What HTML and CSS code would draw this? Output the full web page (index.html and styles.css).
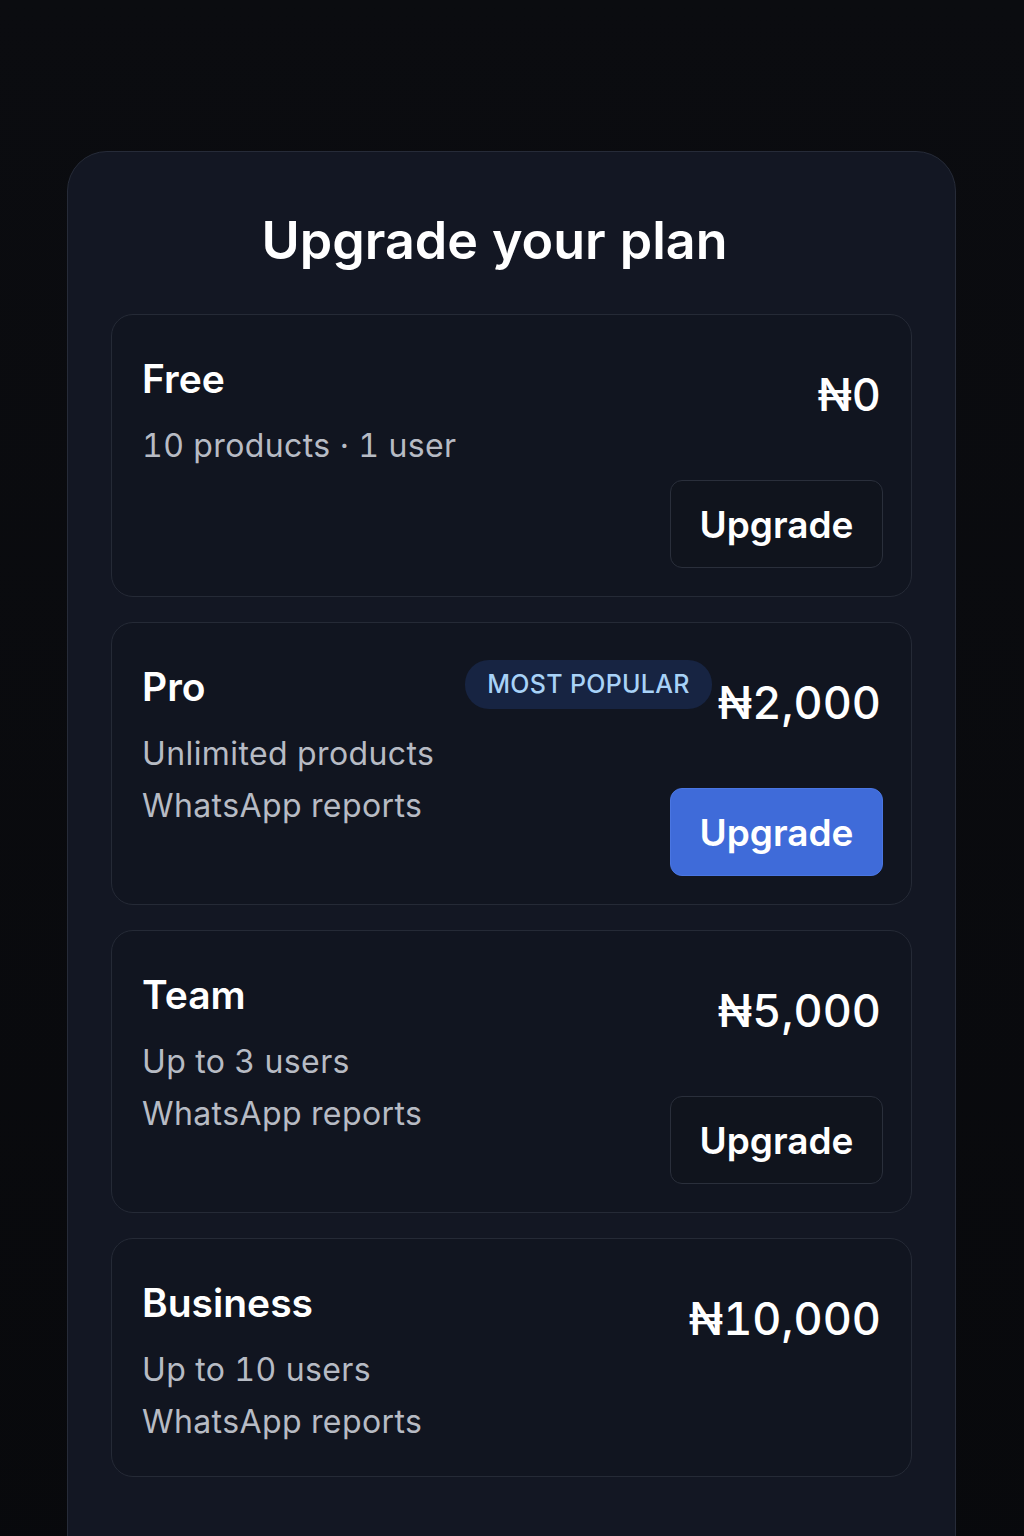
FILE: index.html
```html
<!DOCTYPE html>
<html lang="en">
<head>
<meta charset="utf-8">
<title>Upgrade your plan</title>
<link rel="stylesheet" href="styles.css">
</head>
<body>
<main class="panel">
  <h1 class="panel-title">Upgrade your plan</h1>
  <div class="plans">
    <section class="plan">
      <div class="plan-info">
        <h2 class="plan-name">Free</h2>
        <p class="plan-desc">10 products · 1 user</p>
      </div>
      <div class="plan-side">
        <div class="price-row"><span class="price">₦0</span></div>
        <button class="btn">Upgrade</button>
      </div>
    </section>
    <section class="plan">
      <div class="plan-info">
        <h2 class="plan-name">Pro</h2>
        <p class="plan-desc">Unlimited products<br>WhatsApp reports</p>
      </div>
      <div class="plan-side">
        <div class="price-row"><span class="badge">MOST POPULAR</span><span class="price">₦2,000</span></div>
        <button class="btn btn-primary">Upgrade</button>
      </div>
    </section>
    <section class="plan">
      <div class="plan-info">
        <h2 class="plan-name">Team</h2>
        <p class="plan-desc">Up to 3 users<br>WhatsApp reports</p>
      </div>
      <div class="plan-side">
        <div class="price-row"><span class="price">₦5,000</span></div>
        <button class="btn">Upgrade</button>
      </div>
    </section>
    <section class="plan">
      <div class="plan-info">
        <h2 class="plan-name">Business</h2>
        <p class="plan-desc">Up to 10 users<br>WhatsApp reports</p>
      </div>
      <div class="plan-side">
        <div class="price-row"><span class="price">₦10,000</span></div>
      </div>
    </section>
  </div>
</main>
</body>
</html>
```
FILE: styles.css
```css
* { box-sizing: border-box; }
html, body { margin: 0; padding: 0; }
body {
  min-height: 1536px;
  background: linear-gradient(180deg, #0b0c10 0%, #08090c 100%);
  font-family: "Inter", "Noto Sans", "DejaVu Sans", sans-serif;
  font-variant-numeric: tabular-nums;
  color: #f5f6f8;
  padding-top: 151px;
  overflow: hidden;
}
.panel {
  width: 889px;
  margin-left: 67px;
  min-height: 1500px;
  background: #131723;
  border: 1px solid #262b38;
  border-radius: 40px;
  padding: 58px 43px 0 43px;
}
.panel-title {
  margin: 0;
  font-size: 52px;
  line-height: 62px;
  font-weight: 600;
  letter-spacing: 0;
  text-align: center;
  padding-right: 34px;
  color: #ffffff;
}
.plans {
  margin-top: 42px;
  display: flex;
  flex-direction: column;
  gap: 25px;
}
.plan {
  display: flex;
  justify-content: space-between;
  align-items: flex-start;
  background: #111520;
  border: 1px solid #252a36;
  border-radius: 22px;
  padding: 41px 30px 28px 30px;
}
.plan-name {
  margin: 0;
  font-size: 39px;
  line-height: 46px;
  font-weight: 600;
  color: #ffffff;
}
.plan-desc {
  margin: 18px 0 0 0;
  font-size: 32px;
  line-height: 52px;
  letter-spacing: 0.4px;
  color: #b7bbc4;
}
.plan-side {
  display: flex;
  flex-direction: column;
  align-items: flex-end;
}
.price-row {
  display: flex;
  align-items: flex-start;
  gap: 6px;
  margin-top: 10px;
  height: 58px;
}
.price {
  font-size: 45px;
  line-height: 58px;
  font-weight: 500;
  color: #ffffff;
}
.badge {
  margin-top: -14px;
  height: 49px;
  line-height: 49px;
  padding: 0 22px;
  border-radius: 24px;
  background: #172442;
  color: #a8d2f7;
  font-size: 25px;
  font-weight: 500;
  letter-spacing: 0.3px;
}
.btn {
  margin-top: 56px;
  width: 213px;
  height: 88px;
  border-radius: 12px;
  border: 1px solid #2a2f3b;
  background: #10141d;
  color: #ffffff;
  font-family: inherit;
  font-size: 37px;
  font-weight: 600;
  margin-right: -2px;
}
.btn-primary {
  background: #3f6bd9;
  border-color: #4a76e2;
}
```
